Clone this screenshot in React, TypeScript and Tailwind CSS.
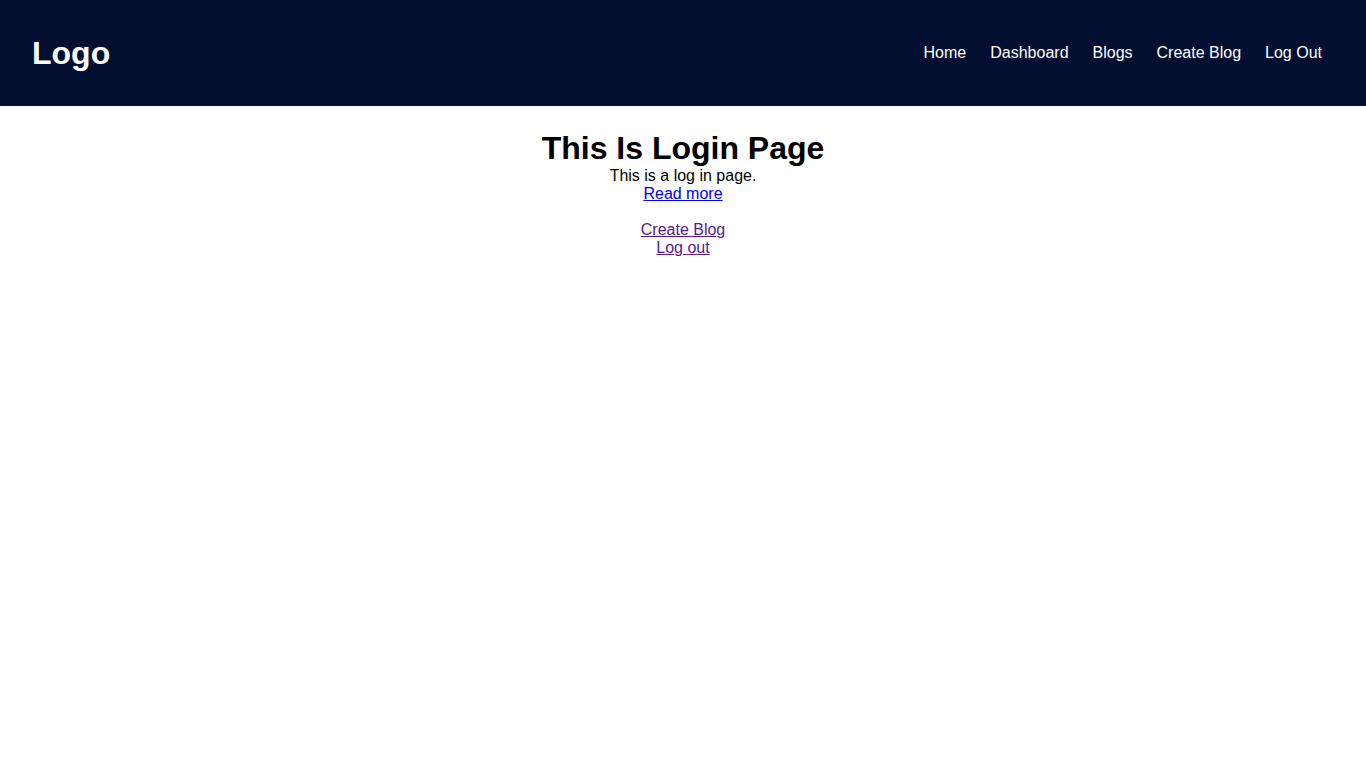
import React from 'react'

const navItems = ['Home', 'Dashboard', 'Blogs', 'Create Blog', 'Log Out']

const App = () => {
  return (
    <div className="min-h-screen bg-white font-['Liberation_Sans',Arial,sans-serif] text-[16px] leading-[normal] text-black">
      <header className="flex h-[106px] items-center justify-between bg-[#030f30] pl-8 pr-11">
        <div className="text-[32px] font-bold text-white">Logo</div>
        <nav className="flex gap-6 text-white">
          {navItems.map((item) => (
            <a key={item} href="#" className="text-white">
              {item}
            </a>
          ))}
        </nav>
      </header>

      <main className="flex flex-col items-center text-center">
        <h1 className="mt-[24px] text-[32px] font-bold">This Is Login Page</h1>
        <p>This is a log in page.</p>
        <a href="#" className="text-[#0000ee] underline">
          Read more
        </a>
        <div className="mt-[18px] flex flex-col items-center">
          <a href="#" className="text-[#551a8b] underline">
            Create Blog
          </a>
          <a href="#" className="text-[#551a8b] underline">
            Log out
          </a>
        </div>
      </main>
    </div>
  )
}

export default App
